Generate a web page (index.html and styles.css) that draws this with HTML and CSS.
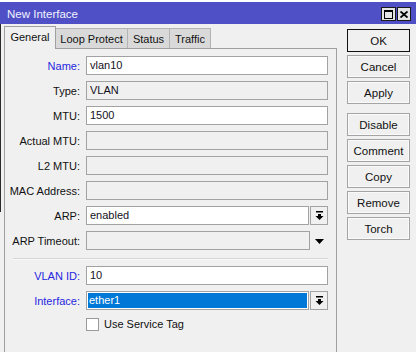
FILE: index.html
```html
<!DOCTYPE html>
<html lang="en">
<head>
    <meta charset="UTF-8">
    <title>New Interface</title>
    <link rel="stylesheet" href="styles.css">
</head>
<body>
    <div class="window">
        <div class="titlebar">
            <span class="title">New Interface</span>
            <div class="title-btns">
                <span class="tbtn">
                    <svg width="9" height="9" viewBox="0 0 9 9"><path d="M0 0h9v9H0z M1 2v6h7V2z" fill="#000" fill-rule="evenodd"/></svg>
                </span>
                <span class="tbtn">
                    <svg width="8" height="7" viewBox="0 0 8 7"><path d="M0.5 0.5l7 6M7.5 0.5l-7 6" stroke="#000" stroke-width="1.8"/></svg>
                </span>
            </div>
        </div>

        <div class="main">
            <div class="tabbox">
                <div class="tabs">
                    <div class="tab tab-general active">General</div>
                    <div class="tab tab-loop">Loop Protect</div>
                    <div class="tab tab-status">Status</div>
                    <div class="tab tab-traffic">Traffic</div>
                </div>

                <div class="panel">
                    <div class="row">
                        <label class="lbl req">Name:</label>
                        <div class="input">vlan10</div>
                    </div>
                    <div class="row">
                        <label class="lbl">Type:</label>
                        <div class="input disabled">VLAN</div>
                    </div>
                    <div class="row">
                        <label class="lbl">MTU:</label>
                        <div class="input">1500</div>
                    </div>
                    <div class="row">
                        <label class="lbl">Actual MTU:</label>
                        <div class="input disabled"></div>
                    </div>
                    <div class="row">
                        <label class="lbl">L2 MTU:</label>
                        <div class="input disabled"></div>
                    </div>
                    <div class="row">
                        <label class="lbl">MAC Address:</label>
                        <div class="input disabled"></div>
                    </div>
                    <div class="row">
                        <label class="lbl">ARP:</label>
                        <div class="combo">
                            <div class="input">enabled</div>
                            <span class="drop-btn">
                                <svg width="9" height="10" viewBox="0 0 9 10"><path d="M1 0h7v1.5H1z M3 3h3v2h2.5L4.5 9 0.5 5H3z" fill="#000"/></svg>
                            </span>
                        </div>
                    </div>
                    <div class="row">
                        <label class="lbl">ARP Timeout:</label>
                        <div class="combo">
                            <div class="input disabled wide"></div>
                            <span class="drop-arrow">
                                <svg width="9" height="5" viewBox="0 0 9 5"><path d="M0 0h9L4.5 5z" fill="#000"/></svg>
                            </span>
                        </div>
                    </div>

                    <div class="separator"></div>

                    <div class="row">
                        <label class="lbl req">VLAN ID:</label>
                        <div class="input">10</div>
                    </div>
                    <div class="row">
                        <label class="lbl req">Interface:</label>
                        <div class="combo">
                            <div class="input selected"><span class="sel-text">ether1</span></div>
                            <span class="drop-btn">
                                <svg width="9" height="10" viewBox="0 0 9 10"><path d="M1 0h7v1.5H1z M3 3h3v2h2.5L4.5 9 0.5 5H3z" fill="#000"/></svg>
                            </span>
                        </div>
                    </div>
                    <div class="row check-row">
                        <span></span>
                        <label class="check"><span class="box"></span>Use Service Tag</label>
                    </div>
                </div>
            </div>

            <div class="actions">
                <button class="btn default">OK</button>
                <button class="btn">Cancel</button>
                <button class="btn">Apply</button>
                <button class="btn spaced">Disable</button>
                <button class="btn">Comment</button>
                <button class="btn">Copy</button>
                <button class="btn">Remove</button>
                <button class="btn">Torch</button>
            </div>
        </div>
    </div>
</body>
</html>
```

FILE: styles.css
```css
* {
    margin: 0;
    padding: 0;
    box-sizing: border-box;
    font-family: 'Liberation Sans', Arial, sans-serif;
}

body {
    width: 416px;
    height: 352px;
    overflow: hidden;
    background: #ffffff;
    font-size: 11px;
    color: #111;
}

.window {
    position: relative;
    margin-top: 2px;
    height: 350px;
    background: #f0f0f0;
    display: flex;
    flex-direction: column;
}

/* edge of the window lying behind */
.window::before {
    content: '';
    position: absolute;
    left: 0;
    top: 22px;
    width: 1px;
    height: 188px;
    background: #2a2a2a;
}

.titlebar {
    height: 22px;
    background: #4f50c6;
    display: flex;
    align-items: center;
    justify-content: space-between;
    padding: 0 5px 0 7px;
    color: #f2f2ff;
}

.title {
    font-size: 11.5px;
    padding-top: 1px;
}

.title-btns {
    display: flex;
    gap: 1px;
    padding-top: 2px;
}

.tbtn {
    width: 15px;
    height: 14px;
    background: #e4e4e4;
    border: 1px solid #1a1a1a;
    display: flex;
    justify-content: center;
    align-items: center;
}

.tbtn:last-child {
    width: 14px;
}

.main {
    flex: 1;
    display: flex;
    padding: 2px 0 0 4px;
}

.tabbox {
    width: 333px;
    display: flex;
    flex-direction: column;
}

.tabs {
    height: 22px;
    display: flex;
    align-items: flex-end;
}

.tab {
    height: 20px;
    display: flex;
    justify-content: center;
    align-items: center;
    background: #d9d9d9;
    border: 1px solid #b4b4b4;
    border-bottom: none;
    margin-left: -1px;
    color: #111;
}

.tab.active {
    height: 23px;
    margin-bottom: -1px;
    margin-left: 0;
    background: #f0f0f0;
    border-color: #a0a0a0;
    position: relative;
    z-index: 1;
    padding-bottom: 3px;
}

.tab-general { width: 52px; }
.tab-loop { width: 73px; }
.tab-status { width: 43px; }
.tab-traffic { width: 42px; }

.panel {
    flex: 1;
    border: 1px solid #a0a0a0;
    border-bottom: none;
    padding: 7px 8px 0 0;
    display: flex;
    flex-direction: column;
    gap: 6px;
}

.row {
    display: grid;
    grid-template-columns: 75px 242px;
    column-gap: 6px;
    align-items: center;
    height: 19px;
}

.lbl {
    text-align: right;
    white-space: nowrap;
    color: #111;
}

.lbl.req {
    color: #2626e0;
}

.input {
    height: 19px;
    background: #ffffff;
    border: 1px solid #a2a2a2;
    padding: 0 3px;
    line-height: 17px;
    color: #14101c;
    white-space: nowrap;
    overflow: hidden;
}

.input.disabled {
    background: #f0f0f0;
}

.combo {
    display: flex;
    align-items: center;
}

.combo .input {
    width: 223px;
}

.combo .input.wide {
    width: 224px;
}

.drop-btn {
    width: 18px;
    height: 19px;
    margin-left: 1px;
    border: 1px solid #a2a2a2;
    background: #f0f0f0;
    display: flex;
    justify-content: center;
    align-items: center;
}

.drop-arrow {
    width: 18px;
    display: flex;
    justify-content: center;
    padding-top: 1px;
}

.input.selected {
    padding: 1px;
}

.sel-text {
    display: block;
    height: 15px;
    line-height: 15px;
    background: #0078d7;
    color: #ffffff;
    padding-left: 1px;
}

.separator {
    height: 2px;
    margin: 2px 0 0 8px;
    border-top: 1px solid #d6d6d6;
    border-bottom: 1px solid #f8f8f8;
}

.check-row {
    height: 14px;
    margin-top: 1px;
}

.check {
    display: flex;
    align-items: center;
    gap: 5px;
    color: #111;
}

.box {
    width: 13px;
    height: 13px;
    background: #ffffff;
    border: 1px solid #9a9a9a;
}

.actions {
    margin-left: 10px;
    padding-top: 3px;
    display: flex;
    flex-direction: column;
    gap: 3px;
}

.btn {
    width: 63px;
    height: 23px;
    background: #f0f0f0;
    border: 1px solid #a4a4a4;
    box-shadow: inset 0 0 0 1px #fafafa;
    font-size: 11.5px;
    color: #111;
    text-align: center;
}

.btn.default {
    border-color: #111;
    box-shadow: none;
}

.btn.spaced {
    margin-top: 6px;
}
```
